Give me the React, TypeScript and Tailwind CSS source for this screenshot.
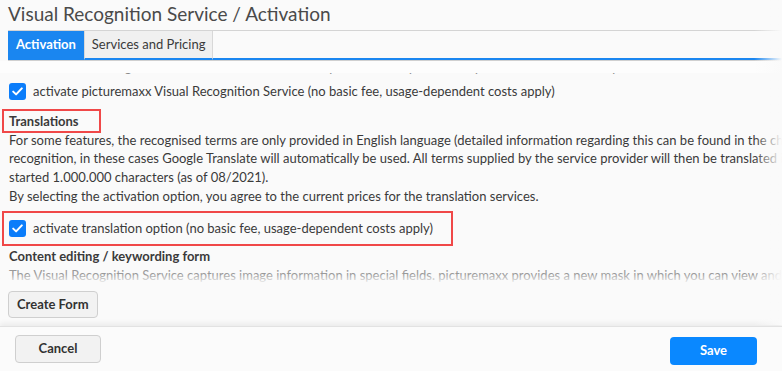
import React from "react";

function Check() {
  return (
    <span className="flex h-[17px] w-[17px] shrink-0 items-center justify-center rounded-[3px] bg-[#0b7dfa]">
      <svg width="11" height="9" viewBox="0 0 11 9" fill="none">
        <path d="M1.2 4.6 L4.1 7.4 L9.8 1.4" stroke="white" strokeWidth="2" strokeLinecap="round" strokeLinejoin="round" />
      </svg>
    </span>
  );
}

export default function App() {
  return (
    <div
      className="relative h-[371px] w-[782px] overflow-hidden bg-[#fafafa] text-[#3a3a3a]"
      style={{ fontFamily: "Lato, 'Open Sans', sans-serif" }}
    >
      <div className="px-[8px] pt-[1px] text-[19px] leading-[26px] text-[#4a4a4a]">
        Visual Recognition Service / Activation
      </div>
      <div className="mt-[3px] ml-[8px] flex border-t border-[#d4d4d4]">
        <div className="flex h-[29px] items-center bg-[#1a86f0] px-[8px] text-[13px] font-bold text-white border-b-2 border-[#1a86f0]">
          Activation
        </div>
        <div className="flex h-[29px] items-center border-x border-[#d8d8d8] bg-[#f0f0f0] px-[7px] text-[13px] text-[#3a3a3a] border-b-2 border-b-[#1a86f0]">
          Services and Pricing
        </div>
        <div className="flex-1 border-b-2 border-[#1a86f0]" />
      </div>
      <div className="mt-[0px] h-[1px] ml-[8px] bg-[#d0d0d0]" />
      <div className="h-[12px] bg-[#fdfdfd]" />
      <div className="relative h-[211px] overflow-hidden text-[13px]">
        <div className="-mt-[15px] whitespace-nowrap px-[9px] leading-[18px] text-[#8a8a8a]">
          All terms of the recognised service are forwarded to the picturemaxx system as keywords and stored as keywords.
        </div>
        <div className="mt-[6px] flex items-center gap-[7px] px-[9px]">
          <Check />
          <span className="whitespace-nowrap">activate picturemaxx Visual Recognition Service (no basic fee, usage-dependent costs apply)</span>
        </div>
        <div className="mt-[7px] ml-[2px] w-[99px] border-2 border-[#f04848] py-[2px] pl-[5px] font-bold leading-[16px]">
          Translations
        </div>
        <div className="mt-[-2px] px-[9px] leading-[18.7px]">
          <div className="whitespace-nowrap">For some features, the recognised terms are only provided in English language (detailed information regarding this can be found in the chapter on supported languages of the</div>
          <div className="whitespace-nowrap">recognition, in these cases Google Translate will automatically be used. All terms supplied by the service provider will then be translated into German. Costs are</div>
          <div className="whitespace-nowrap">started 1.000.000 characters (as of 08/2021).</div>
          <div className="whitespace-nowrap">By selecting the activation option, you agree to the current prices for the translation services.</div>
        </div>
        <div className="mt-[6px] ml-[2px] flex h-[35px] w-[451px] items-center gap-[7px] border-2 border-[#f04848] pl-[5px]">
          <Check />
          <span className="whitespace-nowrap">activate translation option (no basic fee, usage-dependent costs apply)</span>
        </div>
        <div className="mt-[1px] px-[9px] font-bold leading-[19px]">Content editing / keywording form</div>
        <div className="whitespace-nowrap px-[9px] leading-[19px] text-[#9a9a9a]">
          The Visual Recognition Service captures image information in special fields. picturemaxx provides a new mask in which you can view and edit these fields.
        </div>
        <div className="pointer-events-none absolute inset-x-0 bottom-0 h-[10px] bg-gradient-to-b from-transparent to-[#fafafa]" />
      </div>
      <div className="px-[8px] pt-[7px]">
        <button className="h-[27px] rounded-[4px] border border-[#cfcfcf] bg-[#f2f2f2] px-[8px] text-[13px] font-bold text-[#333]">
          Create Form
        </button>
      </div>
      <div className="absolute inset-x-0 bottom-0 flex h-[45px] items-center justify-between border-t border-[#e2e2e2] bg-[#fbfbfb] pl-[15px] pr-[25px] shadow-[0_-3px_5px_rgba(0,0,0,0.06)]">
        <button className="h-[28px] w-[86px] rounded-[4px] border border-[#cfcfcf] bg-[#f2f2f2] text-[13px] font-bold text-[#333]">
          Cancel
        </button>
        <button className="mt-[3px] h-[28px] w-[87px] rounded-[4px] bg-[#0a88ff] text-[13px] font-bold text-white">
          Save
        </button>
      </div>
      <div className="pointer-events-none absolute right-0 top-0 h-[325px] w-[28px] bg-gradient-to-r from-transparent to-[#fafafa]" />
    </div>
  );
}
